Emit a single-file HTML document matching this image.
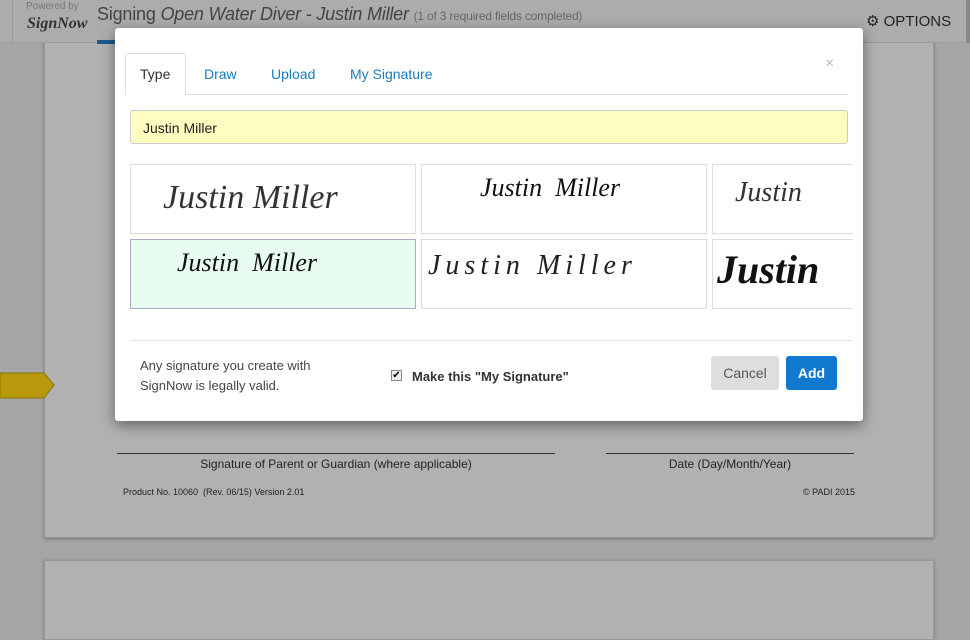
<!DOCTYPE html>
<html><head><meta charset="utf-8"><style>
*{box-sizing:border-box;margin:0;padding:0}
body{width:970px;height:611px;overflow:hidden;background:#a5a5a5;font-family:"Liberation Sans",sans-serif;position:relative}
.hdr{position:absolute;left:0;top:0;width:970px;height:43px;background:#acacac;border-bottom:1px solid #999;z-index:2}
.page{position:absolute;left:44px;width:890px;background:#b1b1b1;border:1px solid #979797;box-shadow:0 1px 3px rgba(0,0,0,.3)}
.modal{position:absolute;left:115px;top:28px;width:748px;height:393px;background:#fff;border-radius:3px;box-shadow:0 4px 14px rgba(0,0,0,.45);z-index:3}
.tab{position:absolute;top:24px;font-size:14px;color:#1a7bbf}
.sig{position:absolute;border:1px solid #ddd;background:#fff;overflow:hidden;font-family:"Liberation Serif",serif;font-style:italic;color:#111;white-space:nowrap}
</style></head><body>
<div class="hdr">
<div style="position:absolute;left:12px;top:0;height:43px;border-left:1px solid #999"></div>
<div style="position:absolute;left:26px;top:1px;font-size:10px;color:#777">Powered by</div>
<div style="position:absolute;left:27px;top:15px;font-size:16px;font-style:italic;font-weight:bold;color:#333;font-family:'Liberation Serif',serif">SignNow</div>
<div style="position:absolute;left:97px;top:4px;font-size:18px;color:#444;letter-spacing:-0.2px">Signing <i>Open Water Diver - Justin Miller</i> <span style="font-size:12px;color:#666">(1 of 3 required fields completed)</span></div>
<div style="position:absolute;left:97px;top:40px;width:30px;height:4px;background:#1d5a87"></div>
<div style="position:absolute;left:866px;top:12px;font-size:15px;color:#222">⚙ OPTIONS</div>
<div style="position:absolute;left:966px;top:0;width:4px;height:43px;background:#888"></div>
</div>
<div class="page" style="top:40px;height:498px">
<div style="position:absolute;left:72px;top:412px;width:438px;border-top:1px solid #333"></div>
<div style="position:absolute;left:561px;top:412px;width:248px;border-top:1px solid #333"></div>
<div style="position:absolute;left:72px;top:416px;width:438px;text-align:center;font-size:12px;color:#222">Signature of Parent or Guardian (where applicable)</div>
<div style="position:absolute;left:561px;top:416px;width:248px;text-align:center;font-size:12px;color:#222">Date (Day/Month/Year)</div>
<div style="position:absolute;left:78px;top:446px;font-size:9px;color:#222">Product No. 10060 &nbsp;(Rev. 06/15) Version 2.01</div>
<div style="position:absolute;right:78px;top:446px;font-size:9px;color:#222">© PADI 2015</div>
</div>
<div class="page" style="top:560px;height:80px"></div>
<svg style="position:absolute;left:0;top:372px" width="56" height="28"><polygon points="0,1 44,1 54,13 44,26 0,26" fill="#b8990c" stroke="#8a7308"/></svg>
<div class="modal">
<div style="position:absolute;left:10px;top:25px;width:61px;height:42px;border:1px solid #ddd;border-bottom:none;background:#fff;border-radius:3px 3px 0 0;z-index:1"></div>
<div style="position:absolute;left:10px;top:66px;width:723px;border-top:1px solid #ddd"></div>
<div class="tab" style="left:25px;top:38px;color:#333;z-index:2">Type</div>
<div class="tab" style="left:89px;top:38px">Draw</div>
<div class="tab" style="left:156px;top:38px">Upload</div>
<div class="tab" style="left:235px;top:38px">My Signature</div>
<div style="position:absolute;left:710px;top:27px;font-size:16px;color:#bbb">×</div>
<div style="position:absolute;left:15px;top:82px;width:718px;height:34px;background:#fdfdc0;border:1px solid #ccc;border-radius:3px;padding:9px 12px;font-size:14px;color:#222">Justin Miller</div>
<div style="position:absolute;left:15px;top:136px;width:723px;height:146px;overflow:hidden">
<div class="sig" style="left:0;top:0;width:286px;height:70px;font-size:34px;padding:14px 32px;color:#333">Justin Miller</div>
<div class="sig" style="left:291px;top:0;width:286px;height:70px;font-size:26px;padding:8px 58px">Justin &nbsp;Miller</div>
<div class="sig" style="left:582px;top:0;width:160px;height:70px;font-size:28px;padding:12px 22px;color:#333">Justin</div>
<div class="sig" style="left:0;top:75px;width:286px;height:70px;font-size:26px;padding:8px 46px;background:#e8fdf0;border-color:#aac">Justin &nbsp;Miller</div>
<div class="sig" style="left:291px;top:75px;width:286px;height:70px;font-size:28px;padding:10px 6px;letter-spacing:5px;color:#222">Justin Miller</div>
<div class="sig" style="left:582px;top:75px;width:160px;height:70px;font-size:40px;padding:6px 4px;font-weight:bold">Justin</div>
</div>
<div style="position:absolute;left:15px;top:312px;width:723px;border-top:1px solid #e3e3e3"></div>
<div style="position:absolute;left:25px;top:328px;font-size:13px;line-height:20px;color:#444">Any signature you create with<br>SignNow is legally valid.</div>
<div style="position:absolute;left:276px;top:342px;width:11px;height:11px;border:1px solid #888;background:#eee;font-size:10px;line-height:10px;text-align:center">✔</div>
<div style="position:absolute;left:297px;top:341px;font-size:13px;color:#333;font-weight:bold">Make this "My Signature"</div>
<div style="position:absolute;left:596px;top:328px;width:68px;height:34px;background:#dedede;border-radius:3px;text-align:center;line-height:34px;font-size:14px;color:#555">Cancel</div>
<div style="position:absolute;left:671px;top:328px;width:51px;height:34px;background:#1279d0;border-radius:3px;text-align:center;line-height:34px;font-size:14px;color:#fff;font-weight:bold">Add</div>
</div>
</body></html>
